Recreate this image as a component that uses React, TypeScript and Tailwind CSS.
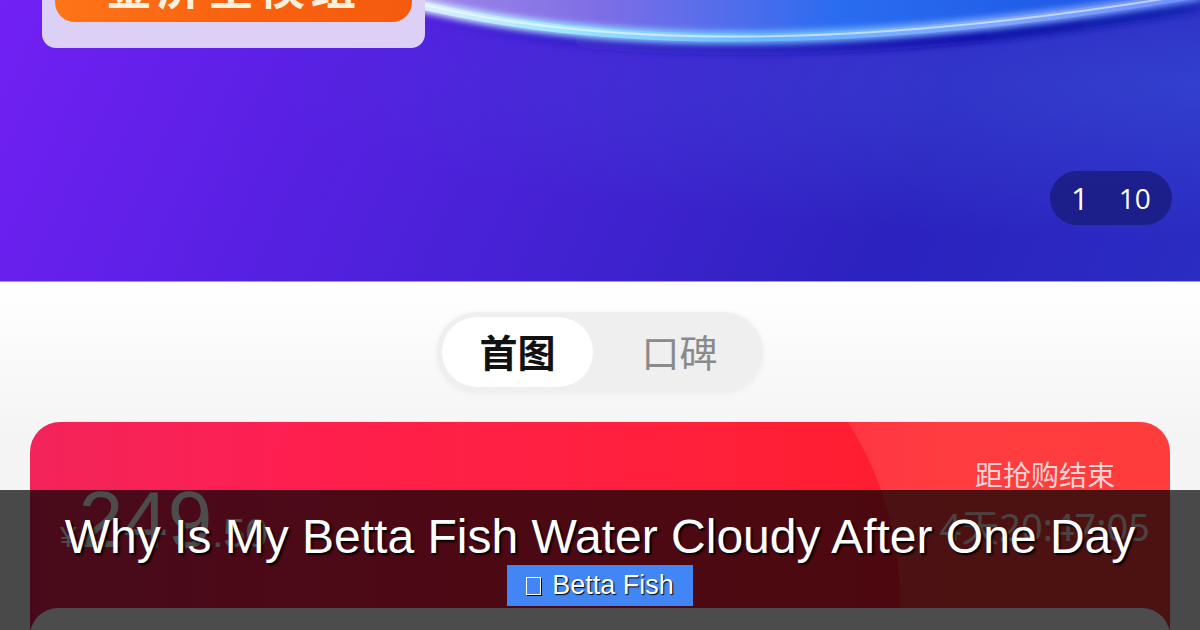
import React from "react";

const cjk = "font-['Noto_Sans','Noto_Sans_CJK_SC',sans-serif]";

function Swoosh() {
  return (
    <svg
      className="absolute left-0 top-0"
      width="1200"
      height="70"
      viewBox="0 0 1200 70"
      fill="none"
    >
      <defs>
        <linearGradient id="sky" x1="400" y1="0" x2="1200" y2="0" gradientUnits="userSpaceOnUse">
          <stop offset="0" stopColor="#a48ae8" />
          <stop offset="0.25" stopColor="#7e6ee6" />
          <stop offset="0.55" stopColor="#2a6cf0" />
          <stop offset="0.85" stopColor="#1f5ae6" />
          <stop offset="1" stopColor="#2a4fd8" />
        </linearGradient>
        <linearGradient id="navy" x1="400" y1="0" x2="1200" y2="0" gradientUnits="userSpaceOnUse">
          <stop offset="0" stopColor="#1a1ab0" stopOpacity="0" />
          <stop offset="0.45" stopColor="#1414b0" stopOpacity="0.5" />
          <stop offset="0.75" stopColor="#0c12a8" stopOpacity="1" />
          <stop offset="1" stopColor="#1424b0" stopOpacity="0.9" />
        </linearGradient>
        <linearGradient id="glow" x1="400" y1="0" x2="1200" y2="0" gradientUnits="userSpaceOnUse">
          <stop offset="0" stopColor="#e8f0ff" />
          <stop offset="0.2" stopColor="#9fe6ff" />
          <stop offset="0.45" stopColor="#6ab8ff" />
          <stop offset="0.75" stopColor="#7fa8ff" />
          <stop offset="1" stopColor="#6f90ff" />
        </linearGradient>
        <filter id="blur4" x="-10%" y="-200%" width="120%" height="500%">
          <feGaussianBlur stdDeviation="3" />
        </filter>
      </defs>
      <path d="M400 -2 Q700 78 1200 -6 L1200 -2 Z" fill="url(#sky)" />
      <path d="M400 8 Q700 88 1200 4" stroke="url(#navy)" strokeWidth="16" filter="url(#blur4)" />
      <path d="M400 0 Q700 78 1200 -6" stroke="url(#glow)" strokeWidth="13" filter="url(#blur4)" />
      <path d="M400 0 Q700 78 1200 -6" stroke="url(#glow)" strokeWidth="8" />
      <path d="M400 -1 Q700 77 1200 -7" stroke="#ffffff" strokeOpacity="0.55" strokeWidth="2" />
    </svg>
  );
}

export default function App() {
  return (
    <div className="relative w-[1200px] h-[630px] overflow-hidden bg-[linear-gradient(180deg,#ffffff_0%,#ffffff_45%,#f4f4f4_70%,#f4f4f4_100%)] font-['Liberation_Sans',sans-serif]">
      {/* Header */}
      <div className="relative h-[282px] overflow-hidden border-b border-[#a596e6] bg-[linear-gradient(115deg,#7220f4_0%,#5a20e4_25%,#4322d2_50%,#2c22bf_75%,#2a2cc2_100%)] flex flex-col">
        <div className="absolute inset-0 bg-[radial-gradient(ellipse_at_100%_30%,rgba(60,90,220,0.45),transparent_55%)]" />
        <Swoosh />
        <div className="relative ml-[42px] w-[383px] h-[48px] rounded-b-[14px] bg-[#dcd0f6] px-[13px]">
          <div className="h-[22px] rounded-b-[20px] bg-[linear-gradient(90deg,#ff7418,#f96210_50%,#f55a0e)] overflow-hidden flex justify-center">
            <span className={`${cjk} mt-[-38px] text-[46px] leading-[48px] font-bold tracking-[5px] text-[#fff0dc]`}>
              金屏全模组
            </span>
          </div>
        </div>
        <div className="relative mt-auto mb-[56px] mr-[28px] self-end w-[122px] h-[54px] rounded-full bg-[#1a1c80]/85 flex items-center justify-center gap-[30px] font-['Open_Sans',sans-serif] text-white text-[31px] leading-none">
          <span>1</span>
          <span className="text-[28px]">10</span>
        </div>
      </div>

      {/* Tabs */}
      <div className="flex justify-center pt-[30px]">
        <div className="w-[326px] h-[80px] rounded-full bg-[#efefef] p-[5px] flex items-center shadow-[0_1px_6px_rgba(0,0,0,0.06)]">
          <div className={`${cjk} w-[151px] h-[70px] rounded-full bg-white flex items-center justify-center text-[38px] font-bold text-[#111]`}>
            首图
          </div>
          <div className={`${cjk} flex-1 flex items-center justify-center pl-[8px] text-[38px] text-[#8a8a8a]`}>
            口碑
          </div>
        </div>
      </div>

      {/* Red card */}
      <div className="relative mx-[30px] mt-[30px] h-[260px] rounded-[30px] overflow-hidden bg-[linear-gradient(90deg,#f2245a_0%,#ff1f50_25%,#ff2a48_55%,#ff3c40_80%,#ff3c3c_100%)]">
        <div className="absolute left-[210px] top-[-152px] w-[660px] h-[660px] rounded-full bg-[linear-gradient(90deg,rgba(255,30,80,0)_0%,rgba(255,26,56,0.6)_60%,#ff1c30_100%)]" />
        <div className="relative h-[186px] flex justify-between pl-[30px] pr-[55px]">
          <div className="flex items-baseline pt-[58px] text-white">
            <span className="text-[30px] leading-none">¥</span>
            <span className="text-[80px] leading-none ml-[2px]">249</span>
            <span className="text-[40px] leading-none">.50</span>
          </div>
          <div className="flex flex-col items-end pt-[36px]">
            <span className={`${cjk} text-[28px] leading-[34px] text-[#ffd4d4]`}>距抢购结束</span>
            <span className={`${cjk} mt-[14px] mr-[-35px] text-[38px] leading-[40px] text-[#ffdede]`}>4天20:47:05</span>
          </div>
        </div>
        <div className="relative h-[80px] rounded-[28px] bg-white" />
      </div>

      {/* Overlay */}
      <div className="absolute left-0 bottom-0 w-[1200px] h-[140px] bg-black/70 flex flex-col items-center pt-[23px]">
        <h1 className="text-white text-[48px] leading-[48px] font-normal [text-shadow:2px_2px_2px_#000]">
          Why Is My Betta Fish Water Cloudy After One Day
        </h1>
        <div className="mt-[4px] h-[41px] px-[19px] bg-[#4285f4] flex items-center gap-[11px] text-white text-[27px] leading-none [text-shadow:1px_1px_1px_#000]">
          <span className="w-[15px] h-[18px] border border-white shadow-[1px_1px_0_#000]" />
          <span>Betta Fish</span>
        </div>
      </div>
    </div>
  );
}
